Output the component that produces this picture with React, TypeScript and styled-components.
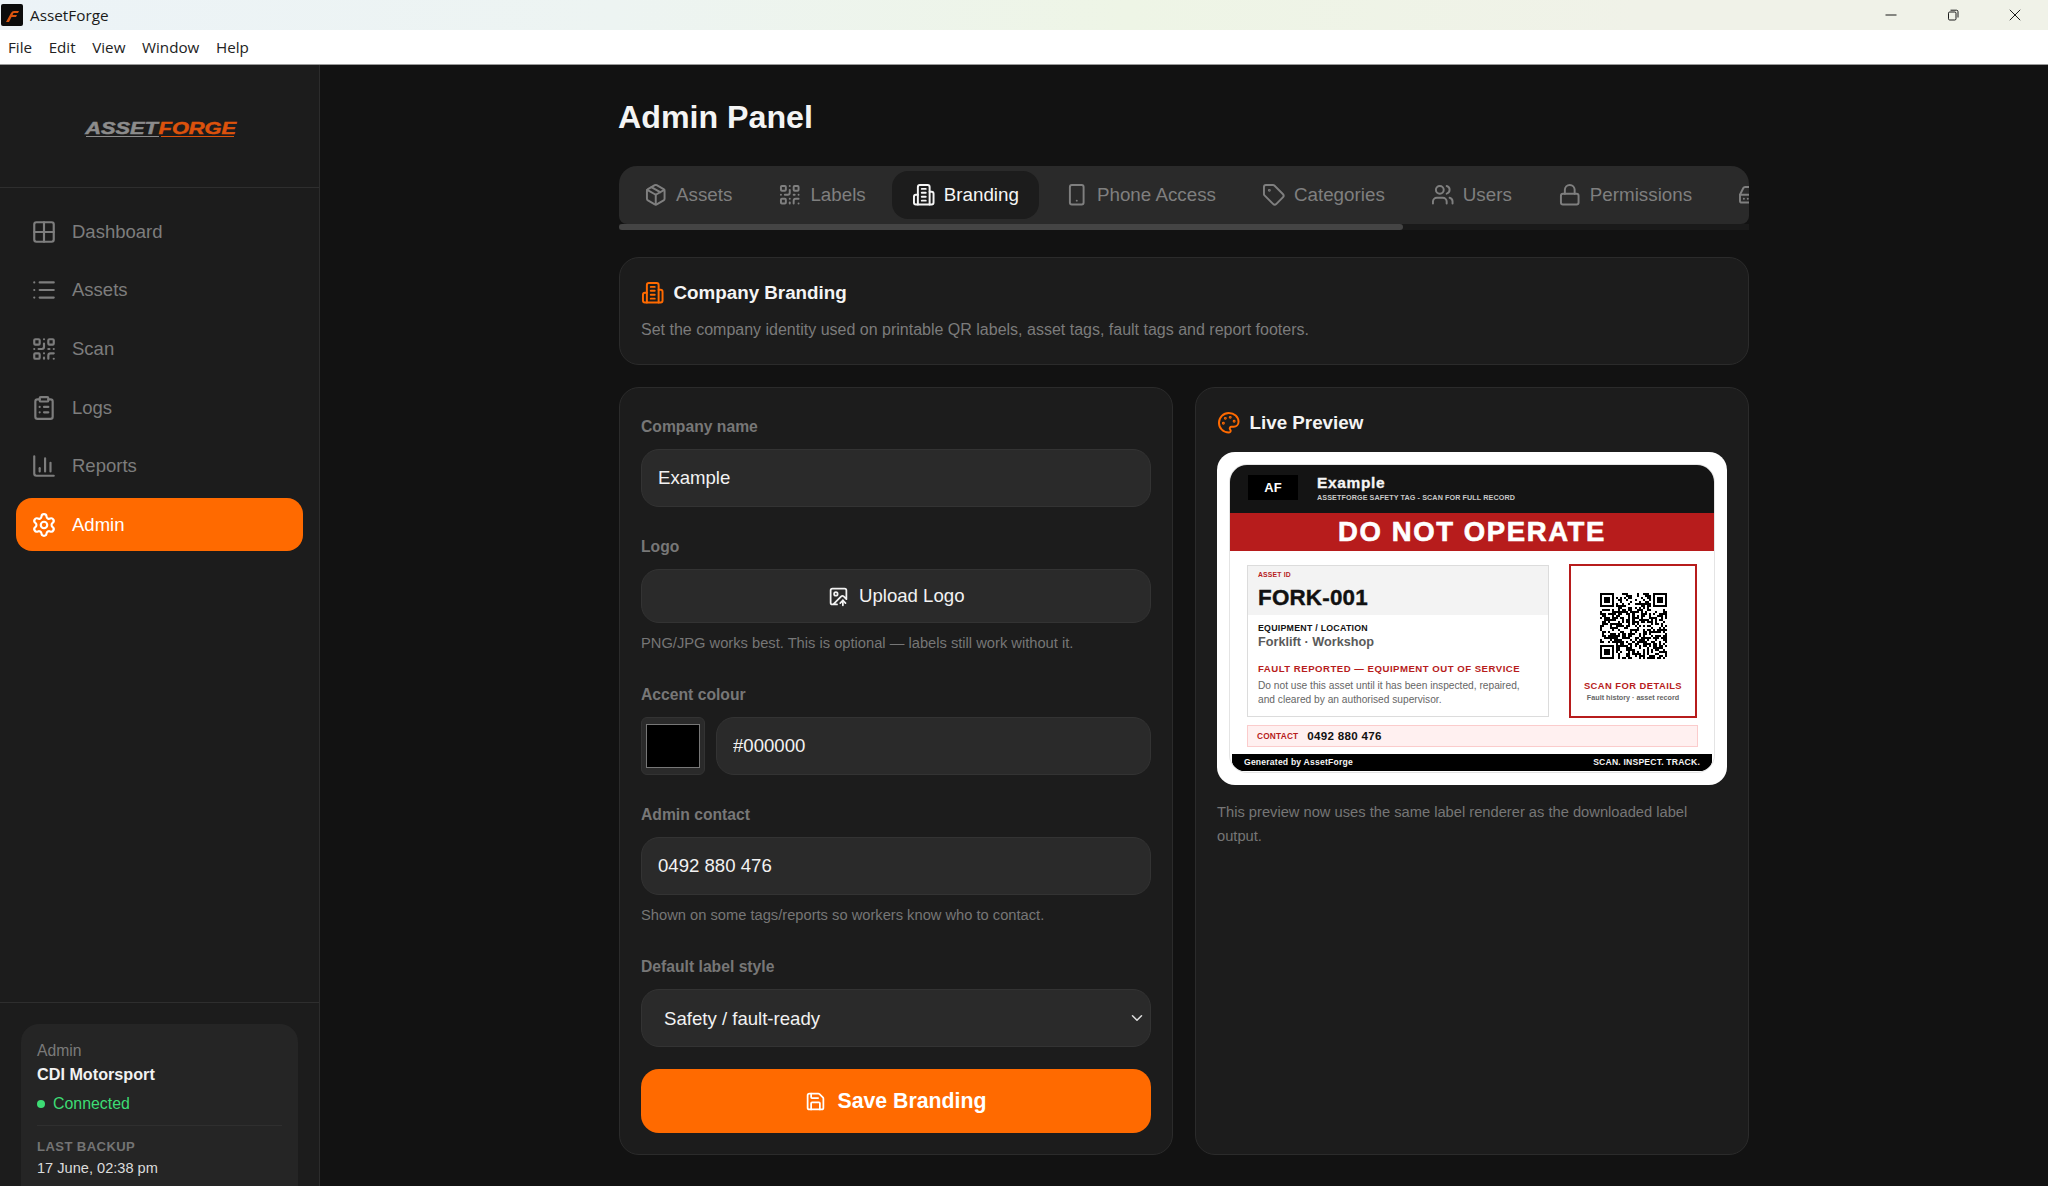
import React from 'react';
import styled, { createGlobalStyle } from 'styled-components';
import {
  ChartColumn, ChevronDown, ClipboardList, Grid2x2, HardDrive, ImageUp, List, Lock,
  Package, Palette, QrCode, Save, Settings, Smartphone, Tag, Users,
} from 'lucide-react';

const sans = `"Liberation Sans", Arial, sans-serif`;
const orange = '#ff6a00';
const red = '#b71c1c';

const GlobalStyle = createGlobalStyle`
  html, body { margin: 0; padding: 0; background: #121212; }
  * { box-sizing: border-box; }
  #root { width: 2048px; height: 1186px; overflow: hidden; font-family: ${sans}; }
`;

const Window = styled.div`
  width: 2048px;
  height: 1186px;
  display: flex;
  flex-direction: column;
  overflow: hidden;
`;

const TitleBar = styled.div`
  height: 30px;
  flex-shrink: 0;
  display: flex;
  align-items: center;
  padding-left: 1px;
  background: linear-gradient(90deg, #ecf3f7 0%, #edf4f2 30%, #eef5e6 55%, #f0f2e8 80%, #f0f2e8 100%);
  font-family: "Open Sans", sans-serif;
  font-size: 15.3px;
  color: #1a1a1a;
`;

const AppGlyph = styled.svg`
  width: 22px;
  height: 22px;
  margin-right: 7px;
`;

const WindowControls = styled.div`
  margin-left: auto;
  display: flex;
  padding-right: 2px;
`;

const WindowControl = styled.div`
  width: 62px;
  height: 30px;
  display: flex;
  align-items: center;
  justify-content: center;
  svg { width: 12px; height: 12px; stroke: #1a1a1a; fill: none; stroke-width: 1; }
`;

const MenuBar = styled.div`
  height: 35px;
  flex-shrink: 0;
  display: flex;
  align-items: center;
  gap: 16.6px;
  padding-left: 8px;
  background: #fff;
  border-bottom: 1px solid #9a9a9a;
  font-family: "Open Sans", sans-serif;
  font-size: 15.2px;
  color: #222;
`;

const Body = styled.div`
  flex: 1;
  display: flex;
  min-height: 0;
`;

const Sidebar = styled.aside`
  width: 320px;
  flex-shrink: 0;
  display: flex;
  flex-direction: column;
  background: #1c1c1c;
  border-right: 1px solid #2c2c2c;
`;

const Brand = styled.div`
  height: 123px;
  flex-shrink: 0;
  display: flex;
  align-items: center;
  justify-content: center;
  border-bottom: 1px solid #2e2e2e;
`;

const LogoMark = styled.div`
  display: flex;
  gap: 2px;
  margin-top: 5px;
`;

const LogoPart = styled.div<{ $tone: string }>`
  width: 73px;
  text-align: center;
  color: ${p => p.$tone};
  font-size: 16.5px;
  line-height: 14px;
  font-weight: 700;
  font-style: italic;
  border-bottom: 1px solid ${p => p.$tone};
  span {
    display: inline-block;
    transform: scaleX(1.32);
    padding-bottom: 1px;
    -webkit-text-stroke: 0.5px ${p => p.$tone};
  }
`;

const Nav = styled.nav`
  display: flex;
  flex-direction: column;
  gap: 5.7px;
  padding: 17px 16px 0;
`;

const NavItem = styled.div<{ $active?: boolean }>`
  height: 53px;
  display: flex;
  align-items: center;
  gap: 15px;
  padding-left: 15px;
  border-radius: 16px;
  font-size: 18.5px;
  color: ${p => (p.$active ? '#fff' : '#7d7d7d')};
  background: ${p => (p.$active ? orange : 'transparent')};
`;

const SidebarFoot = styled.div`
  margin-top: auto;
  height: 184px;
  flex-shrink: 0;
  padding: 21px 21px 0;
  border-top: 1px solid #2e2e2e;
  overflow: hidden;
`;

const AccountCard = styled.div`
  height: 190px;
  padding: 15px 16px;
  background: #252525;
  border-radius: 18px;
`;

const AccountRole = styled.div`
  font-size: 15.7px;
  line-height: 24px;
  color: #7a7a7a;
`;

const AccountName = styled.div`
  font-size: 16.2px;
  line-height: 23px;
  font-weight: 700;
  color: #f2f2f2;
`;

const Status = styled.div`
  display: flex;
  align-items: center;
  gap: 8px;
  margin-top: 6px;
  font-size: 15.9px;
  line-height: 24px;
  color: #3ddc74;
  &::before {
    content: '';
    width: 8px;
    height: 8px;
    border-radius: 50%;
    background: #3ddc74;
  }
`;

const AccountDivider = styled.div`
  height: 1px;
  margin: 9px 0 10px;
  background: #2f2f2f;
`;

const BackupLabel = styled.div`
  font-size: 13.1px;
  line-height: 22px;
  font-weight: 700;
  letter-spacing: 0.4px;
  color: #747474;
`;

const BackupValue = styled.div`
  font-size: 14.6px;
  line-height: 21px;
  color: #dcdcdc;
`;

const Main = styled.main`
  flex: 1;
  min-width: 0;
  background: #121212;
  display: flex;
  justify-content: center;
  padding-top: 34px;
`;

const Content = styled.div`
  width: 1130px;
`;

const PageTitle = styled.h1`
  margin: 0 0 30px -1px;
  font-size: 32.2px;
  line-height: 37px;
  font-weight: 700;
  color: #f4f4f4;
`;

const TabStrip = styled.div`
  height: 58px;
  display: flex;
  align-items: center;
  gap: 6px;
  padding: 0 5px;
  background: #2a2a2a;
  border-radius: 18px 18px 8px 8px;
  overflow: hidden;
`;

const Tab = styled.div<{ $active?: boolean }>`
  height: 48px;
  flex-shrink: 0;
  display: flex;
  align-items: center;
  gap: 8.5px;
  padding: 0 20px;
  border-radius: 16px;
  font-size: 18.8px;
  color: ${p => (p.$active ? '#f5f5f5' : '#7f7f7f')};
  background: ${p => (p.$active ? '#1c1c1c' : 'transparent')};
`;

const ScrollTrack = styled.div`
  height: 6px;
  background: #1a1a1a;
`;

const ScrollThumb = styled.div`
  width: 784px;
  height: 100%;
  border-radius: 3px;
  background: #444;
`;

const Card = styled.section`
  background: #1c1c1c;
  border: 1px solid #2b2b2b;
  border-radius: 20px;
`;

const IntroCard = styled(Card)`
  height: 108px;
  margin-top: 27px;
  padding: 23px 21px;
`;

const CardTitle = styled.h2`
  margin: 0;
  display: flex;
  align-items: center;
  gap: 9px;
  font-size: 18.8px;
  line-height: 23px;
  font-weight: 700;
  color: #f4f4f4;
  svg { color: ${orange}; }
`;

const IntroText = styled.p`
  margin: 13px 0 0;
  font-size: 16px;
  line-height: 24px;
  color: #7b7b7b;
`;

const Columns = styled.div`
  display: grid;
  grid-template-columns: 554px 554px;
  gap: 22px;
  margin-top: 22px;
`;

const FormCard = styled(Card)`
  height: 768px;
  padding: 27px 21px 0;
`;

const Fields = styled.div`
  display: flex;
  flex-direction: column;
  gap: 28px;
`;

const Field = styled.div`
  display: flex;
  flex-direction: column;
`;

const FieldLabel = styled.label`
  margin-bottom: 10px;
  font-size: 15.7px;
  line-height: 24px;
  font-weight: 700;
  color: #777;
`;

const Hint = styled.div`
  margin-top: 8px;
  font-size: 14.7px;
  line-height: 24px;
  color: #767676;
`;

const TextInput = styled.input`
  width: 100%;
  height: 58px;
  padding: 0 16px;
  background: #2a2a2a;
  border: 1px solid #333;
  border-radius: 18px;
  outline: none;
  font-family: ${sans};
  font-size: 18.6px;
  color: #f2f2f2;
`;

const UploadButton = styled.button`
  height: 54px;
  display: flex;
  align-items: center;
  justify-content: center;
  gap: 10.5px;
  background: #2a2a2a;
  border: 1px solid #333;
  border-radius: 18px;
  font-family: ${sans};
  font-size: 18.6px;
  color: #f2f2f2;
`;

const ColourRow = styled.div`
  display: flex;
  gap: 11px;
`;

const Swatch = styled.div`
  width: 64px;
  height: 58px;
  flex-shrink: 0;
  padding: 6px 4px;
  background: #2a2a2a;
  border: 1px solid #333;
  border-radius: 6px;
`;

const SwatchFill = styled.div<{ $colour: string }>`
  width: 100%;
  height: 100%;
  background: ${p => p.$colour};
  border: 1px solid #777;
`;

const SelectWrap = styled.div`
  position: relative;
  svg {
    position: absolute;
    right: 5px;
    top: 20px;
    color: #ddd;
  }
`;

const SelectBox = styled.select`
  width: 100%;
  height: 58px;
  padding: 0 22px;
  appearance: none;
  background: #2a2a2a;
  border: 1px solid #333;
  border-radius: 18px;
  outline: none;
  font-family: ${sans};
  font-size: 18.6px;
  color: #f2f2f2;
`;

const SaveButton = styled.button`
  width: 100%;
  height: 64px;
  margin-top: 22px;
  display: flex;
  align-items: center;
  justify-content: center;
  gap: 11px;
  background: ${orange};
  border: none;
  border-radius: 18px;
  font-family: ${sans};
  font-size: 21.3px;
  font-weight: 700;
  color: #fff;
`;

const PreviewCard = styled(Card)`
  height: 768px;
  padding: 23px 21px 0;
`;

const LabelFrame = styled.div`
  margin-top: 17px;
  padding: 12px;
  background: #fff;
  border-radius: 18px;
`;

const SafetyTag = styled.div`
  height: 309px;
  display: flex;
  flex-direction: column;
  border: 1px solid #e4e4e4;
  border-radius: 18px;
  overflow: hidden;
  background: #fff;
  color: #111;
`;

const TagHeader = styled.div`
  height: 48px;
  flex-shrink: 0;
  display: flex;
  align-items: center;
  gap: 19px;
  padding: 0 0 3px 18px;
  background: #141414;
`;

const TagLogo = styled.div`
  width: 50px;
  height: 25px;
  display: flex;
  align-items: center;
  justify-content: center;
  background: #000;
  color: #fff;
  font-size: 13px;
  font-weight: 700;
`;

const TagTitles = styled.div`
  margin-top: 2px;
`;

const TagCompany = styled.div`
  color: #f5f5f5;
  font-size: 15.5px;
  line-height: 19px;
  font-weight: 700;
  letter-spacing: 0.65px;
  -webkit-text-stroke: 0.3px #f5f5f5;
`;

const TagStrap = styled.div`
  color: #c8c8c8;
  font-size: 7.2px;
  line-height: 10px;
  font-weight: 700;
  letter-spacing: 0.1px;
  padding-top: 1px;
`;

const TagBanner = styled.div`
  height: 38px;
  flex-shrink: 0;
  display: flex;
  align-items: center;
  justify-content: center;
  background: ${red};
  color: #fff;
  font-size: 27.5px;
  font-weight: 700;
  letter-spacing: 1.6px;
  -webkit-text-stroke: 0.6px #fff;
`;

const TagBody = styled.div`
  display: flex;
  gap: 20px;
  padding: 14px 17px 0 17px;
`;

const AssetPanel = styled.div`
  width: 303px;
  height: 152px;
  border: 1.5px solid #dcdcdc;
`;

const AssetHead = styled.div`
  height: 49px;
  padding: 4px 10px 0;
  background: #f3f3f3;
`;

const AssetIdLabel = styled.div`
  font-size: 6.8px;
  line-height: 10px;
  font-weight: 700;
  letter-spacing: 0.2px;
  color: ${red};
`;

const AssetId = styled.div`
  margin-top: 5px;
  font-size: 22.4px;
  line-height: 26px;
  font-weight: 700;
  letter-spacing: 0.2px;
  color: #111;
  -webkit-text-stroke: 0.4px #111;
`;

const AssetDetails = styled.div`
  padding: 7px 10px 0;
`;

const EquipLabel = styled.div`
  font-size: 8.8px;
  line-height: 12px;
  font-weight: 700;
  letter-spacing: 0.25px;
`;

const EquipValue = styled.div`
  font-size: 12.7px;
  line-height: 16px;
  font-weight: 700;
  color: #5a5a5a;
`;

const FaultTitle = styled.div`
  margin-top: 13px;
  font-size: 9.6px;
  line-height: 12px;
  font-weight: 700;
  letter-spacing: 0.5px;
  color: ${red};
  white-space: nowrap;
`;

const FaultText = styled.div`
  margin-top: 4px;
  font-size: 10.2px;
  line-height: 14.5px;
  color: #666;
  white-space: nowrap;
`;

const QrPanel = styled.div`
  width: 128px;
  height: 154px;
  margin-top: -1px;
  flex-shrink: 0;
  display: flex;
  flex-direction: column;
  align-items: center;
  padding-top: 27px;
  border: 2.5px solid ${red};
`;

const QrCaption = styled.div`
  margin-top: 21px;
  font-size: 9.4px;
  line-height: 12px;
  font-weight: 700;
  letter-spacing: 0.45px;
  color: ${red};
`;

const QrSub = styled.div`
  font-size: 7.2px;
  line-height: 12px;
  font-weight: 700;
  color: #666;
`;

const ContactBar = styled.div`
  height: 22px;
  margin: 7px 17px 0;
  width: 451px;
  display: flex;
  align-items: center;
  gap: 9px;
  padding-left: 9px;
  background: #fff0f0;
  border: 1px solid #fbcccc;
`;

const ContactLabel = styled.span`
  font-size: 8.3px;
  font-weight: 700;
  letter-spacing: 0.2px;
  color: ${red};
`;

const ContactValue = styled.span`
  font-size: 11.6px;
  font-weight: 700;
  letter-spacing: 0.3px;
  color: #111;
`;

const TagFooter = styled.div`
  height: 17px;
  margin: 7px 2px 0;
  display: flex;
  align-items: center;
  justify-content: space-between;
  padding: 0 12px;
  background: #000;
  border-radius: 0 0 10px 10px;
  color: #f5f5f5;
  font-size: 8.6px;
  font-weight: 700;
  letter-spacing: 0.2px;
`;

const PreviewNote = styled.p`
  margin: 15px 0 0;
  font-size: 14.7px;
  line-height: 24px;
  color: #767676;
`;

// the older lucide building-2: tower, two wings and four floor bars
function BuildingIcon({ size }: { size: number }) {
  return (
    <svg width={size} height={size} viewBox="0 0 24 24" fill="none" stroke="currentColor" strokeWidth="2" strokeLinecap="round" strokeLinejoin="round">
      <path d="M6 22V4a2 2 0 0 1 2-2h8a2 2 0 0 1 2 2v18Z" />
      <path d="M6 12H4a2 2 0 0 0-2 2v6a2 2 0 0 0 2 2h2" />
      <path d="M18 9h2a2 2 0 0 1 2 2v9a2 2 0 0 1-2 2h-2" />
      <path d="M10 6h4" />
      <path d="M10 10h4" />
      <path d="M10 14h4" />
      <path d="M10 18h4" />
    </svg>
  );
}

const navItems = [
  { label: 'Dashboard', icon: Grid2x2 },
  { label: 'Assets', icon: List },
  { label: 'Scan', icon: QrCode },
  { label: 'Logs', icon: ClipboardList },
  { label: 'Reports', icon: ChartColumn },
  { label: 'Admin', icon: Settings, active: true },
];

const tabs = [
  { label: 'Assets', icon: Package },
  { label: 'Labels', icon: QrCode },
  { label: 'Branding', icon: BuildingIcon, active: true },
  { label: 'Phone Access', icon: Smartphone },
  { label: 'Categories', icon: Tag },
  { label: 'Users', icon: Users },
  { label: 'Permissions', icon: Lock },
  { label: '', icon: HardDrive },
];

// a made up 33x33 matrix, only the three finder squares are "real"
function buildQr() {
  const size = 33;
  let seed = 73;
  const next = () => {
    seed = (seed * 1103515245 + 12345) & 0x7fffffff;
    return (seed >> 12) % 100;
  };
  const cells: [number, number][] = [];
  for (let y = 0; y < size; y++) {
    for (let x = 0; x < size; x++) {
      const isCorner = (x < 8 && y < 8) || (x >= size - 8 && y < 8) || (x < 8 && y >= size - 8);
      if (isCorner) {
        const cx = x < 8 ? x : x - (size - 7);
        const cy = y < 8 ? y : y - (size - 7);
        const inRange = cx >= 0 && cx < 7 && cy >= 0 && cy < 7;
        const ring = cx === 0 || cx === 6 || cy === 0 || cy === 6;
        const core = cx >= 2 && cx <= 4 && cy >= 2 && cy <= 4;
        if (inRange && (ring || core)) cells.push([x, y]);
      } else if (next() < 52) {
        cells.push([x, y]);
      }
    }
  }
  return cells;
}

const qrCells = buildQr();

function QrImage() {
  return (
    <svg width="67" height="66" viewBox="0 0 33 33" preserveAspectRatio="none" shapeRendering="crispEdges">
      <rect width="33" height="33" fill="#fff" />
      {qrCells.map(([x, y]) => (
        <rect key={`${x}-${y}`} x={x} y={y} width="1" height="1" fill="#000" />
      ))}
    </svg>
  );
}

export default function App() {
  return (
    <Window>
      <GlobalStyle />
      <TitleBar>
        <AppGlyph viewBox="0 0 22 22">
          <rect width="22" height="22" rx="2" fill="#0c0c0c" />
          <path d="M5 18 L10 9 Q11 7 13 7 H18 L17 9 H12.5 L11.5 11 H16 L15 13 H10.5 L8 18 Z" fill="#d9540f" />
        </AppGlyph>
        AssetForge
        <WindowControls>
          <WindowControl>
            <svg viewBox="0 0 12 12"><path d="M0.5 6 H11.5" /></svg>
          </WindowControl>
          <WindowControl>
            <svg viewBox="0 0 12 12">
              <rect x="1.5" y="3" width="7.5" height="8" rx="1.2" />
              <path d="M3.5 1.2 H9.5 Q11 1.2 11 2.7 V8.5" />
            </svg>
          </WindowControl>
          <WindowControl>
            <svg viewBox="0 0 12 12"><path d="M0.8 0.8 L11.2 11.2 M11.2 0.8 L0.8 11.2" /></svg>
          </WindowControl>
        </WindowControls>
      </TitleBar>
      <MenuBar>
        <span>File</span>
        <span>Edit</span>
        <span>View</span>
        <span>Window</span>
        <span>Help</span>
      </MenuBar>
      <Body>
        <Sidebar>
          <Brand>
            <LogoMark>
              <LogoPart $tone="#8c8c8c"><span>ASSET</span></LogoPart>
              <LogoPart $tone="#dc520c"><span>FORGE</span></LogoPart>
            </LogoMark>
          </Brand>
          <Nav>
            {navItems.map(item => (
              <NavItem key={item.label} $active={item.active}>
                <item.icon size={26} />
                {item.label}
              </NavItem>
            ))}
          </Nav>
          <SidebarFoot>
            <AccountCard>
              <AccountRole>Admin</AccountRole>
              <AccountName>CDI Motorsport</AccountName>
              <Status>Connected</Status>
              <AccountDivider />
              <BackupLabel>LAST BACKUP</BackupLabel>
              <BackupValue>17 June, 02:38 pm</BackupValue>
            </AccountCard>
          </SidebarFoot>
        </Sidebar>
        <Main>
          <Content>
            <PageTitle>Admin Panel</PageTitle>
            <TabStrip>
              {tabs.map(tab => (
                <Tab key={tab.label} $active={tab.active}>
                  <tab.icon size={23.5} />
                  {tab.label}
                </Tab>
              ))}
            </TabStrip>
            <ScrollTrack><ScrollThumb /></ScrollTrack>
            <IntroCard>
              <CardTitle><BuildingIcon size={23.5} />Company Branding</CardTitle>
              <IntroText>
                Set the company identity used on printable QR labels, asset tags, fault tags and report footers.
              </IntroText>
            </IntroCard>
            <Columns>
              <FormCard>
                <Fields>
                  <Field>
                    <FieldLabel>Company name</FieldLabel>
                    <TextInput defaultValue="Example" />
                  </Field>
                  <Field>
                    <FieldLabel>Logo</FieldLabel>
                    <UploadButton><ImageUp size={21} />Upload Logo</UploadButton>
                    <Hint>PNG/JPG works best. This is optional — labels still work without it.</Hint>
                  </Field>
                  <Field>
                    <FieldLabel>Accent colour</FieldLabel>
                    <ColourRow>
                      <Swatch><SwatchFill $colour="#000000" /></Swatch>
                      <TextInput defaultValue="#000000" />
                    </ColourRow>
                  </Field>
                  <Field>
                    <FieldLabel>Admin contact</FieldLabel>
                    <TextInput defaultValue="0492 880 476" />
                    <Hint>Shown on some tags/reports so workers know who to contact.</Hint>
                  </Field>
                  <Field>
                    <FieldLabel>Default label style</FieldLabel>
                    <SelectWrap>
                      <SelectBox defaultValue="safety">
                        <option value="safety">Safety / fault-ready</option>
                      </SelectBox>
                      <ChevronDown size={18} />
                    </SelectWrap>
                  </Field>
                </Fields>
                <SaveButton><Save size={21} />Save Branding</SaveButton>
              </FormCard>
              <PreviewCard>
                <CardTitle><Palette size={23.5} />Live Preview</CardTitle>
                <LabelFrame>
                  <SafetyTag>
                    <TagHeader>
                      <TagLogo>AF</TagLogo>
                      <TagTitles>
                        <TagCompany>Example</TagCompany>
                        <TagStrap>ASSETFORGE SAFETY TAG - SCAN FOR FULL RECORD</TagStrap>
                      </TagTitles>
                    </TagHeader>
                    <TagBanner>DO NOT OPERATE</TagBanner>
                    <TagBody>
                      <AssetPanel>
                        <AssetHead>
                          <AssetIdLabel>ASSET ID</AssetIdLabel>
                          <AssetId>FORK-001</AssetId>
                        </AssetHead>
                        <AssetDetails>
                          <EquipLabel>EQUIPMENT / LOCATION</EquipLabel>
                          <EquipValue>Forklift · Workshop</EquipValue>
                          <FaultTitle>FAULT REPORTED — EQUIPMENT OUT OF SERVICE</FaultTitle>
                          <FaultText>
                            Do not use this asset until it has been inspected, repaired,<br />
                            and cleared by an authorised supervisor.
                          </FaultText>
                        </AssetDetails>
                      </AssetPanel>
                      <QrPanel>
                        <QrImage />
                        <QrCaption>SCAN FOR DETAILS</QrCaption>
                        <QrSub>Fault history · asset record</QrSub>
                      </QrPanel>
                    </TagBody>
                    <ContactBar>
                      <ContactLabel>CONTACT</ContactLabel>
                      <ContactValue>0492 880 476</ContactValue>
                    </ContactBar>
                    <TagFooter>
                      <span>Generated by AssetForge</span>
                      <span>SCAN. INSPECT. TRACK.</span>
                    </TagFooter>
                  </SafetyTag>
                </LabelFrame>
                <PreviewNote>
                  This preview now uses the same label renderer as the downloaded label output.
                </PreviewNote>
              </PreviewCard>
            </Columns>
          </Content>
        </Main>
      </Body>
    </Window>
  );
}
